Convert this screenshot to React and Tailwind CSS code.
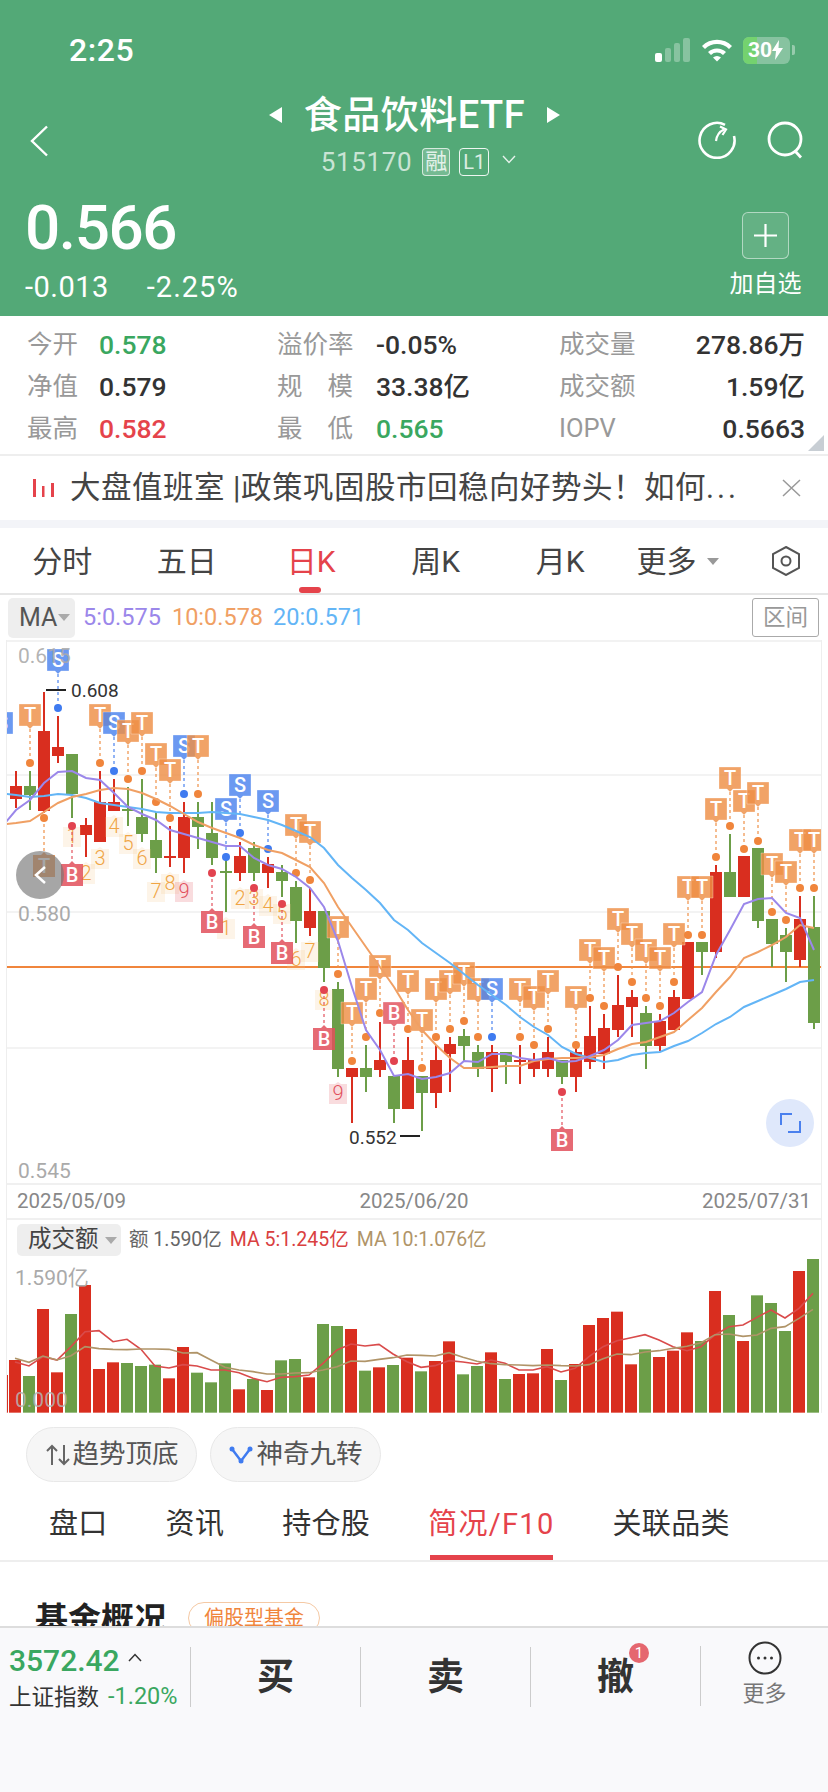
import React from "react";

const RED = "#d92e1f", GREEN = "#6c9e48";
const X = (i) => 16 + 14 * i;

// [color, wickTop, bodyTop, bodyBot, wickBot]
const candles = [
  ["r",771,786,799,808],["g",771,786,795,810],["r",692,731,811,813],["r",716,747,756,763],["g",754,754,794,818],
  ["r",818,825,835,857],["r",771,802,842,842],["r",779,802,811,811],["g",787,809,811,826],["g",779,817,834,842],
  ["g",812,840,858,873],["r",826,856,858,867],["r",802,817,858,873],["g",802,817,827,849],["g",802,833,858,865],
  ["g",860,871,873,912],["r",842,856,873,881],["g",842,848,873,881],["r",857,864,873,888],["g",865,872,881,897],
  ["g",881,887,921,943],["r",888,911,928,936],["g",911,911,968,982],["g",982,989,1069,1077],["r",1068,1068,1077,1123],
  ["g",1045,1068,1077,1092],["r",1022,1060,1070,1077],["g",1076,1076,1109,1123],["r",1037,1060,1109,1109],["g",1076,1076,1093,1131],
  ["r",1045,1060,1093,1108],["r",1037,1044,1054,1092],["g",1029,1036,1046,1062],["g",1045,1052,1069,1077],["r",1045,1052,1069,1092],
  ["g",1052,1052,1062,1084],["r",1045,1060,1062,1084],["r",1053,1060,1069,1077],["r",1037,1052,1069,1077],["g",1060,1060,1077,1084],
  ["r",1045,1052,1077,1092],["r",1006,1036,1062,1069],["r",1014,1028,1054,1069],["r",975,1005,1030,1037],["r",990,997,1007,1037],
  ["g",1006,1013,1046,1069],["r",1014,1021,1046,1051],["r",990,997,1030,1030],["r",942,942,999,999],["g",942,942,952,975],
  ["r",865,872,952,958],["g",834,872,897,897],["r",856,856,897,897],["g",848,848,921,928],["g",919,919,944,967],
  ["g",928,935,952,982],["r",896,919,960,967],["g",896,927,1023,1029],
];

const ma5 = [810,800,783,772,771,778,780,793,807,814,820,830,834,838,842,846,846,858,865,869,877,888,907,941,987,1030,1050,1076,1074,1079,1077,1073,1061,1062,1054,1054,1058,1060,1058,1062,1061,1056,1050,1040,1025,1023,1021,1013,1002,992,955,930,904,899,898,913,918,950];
const ma10 = [823,821,812,803,797,794,790,788,789,793,799,806,814,822,828,833,838,845,850,853,860,867,883,907,927,947,967,987,1010,1030,1045,1058,1068,1068,1067,1066,1066,1061,1059,1058,1058,1057,1055,1049,1044,1042,1037,1032,1020,1008,992,977,958,952,945,937,925,928];
const ma20 = [795,797,796,794,795,798,803,805,807,809,812,813,813,813,812,813,814,817,820,825,831,837,848,865,878,890,903,920,930,943,953,963,974,985,995,1005,1017,1027,1035,1047,1054,1058,1062,1060,1055,1053,1052,1046,1041,1033,1024,1017,1007,1001,995,989,982,980];

// [letter, i, tagTop, dotY]
const upTags = [
  ["S",-1,712,771],["T",1,704,763],["S",3,649,708],["T",6,704,763],["S",7,712,771],["T",8,720,779],["T",9,712,771],
  ["T",10,743,802],["T",11,759,818],["S",12,735,794],["T",13,735,794],["S",15,798,857],["S",16,774,833],["S",18,790,849],
  ["T",20,814,873],["T",21,821,880],["T",23,916,974],["T",24,1002,1061],["T",25,978,1037],["T",26,955,1013],["B",27,1002,1061],
  ["T",28,970,1029],["T",29,1009,1068],["T",30,978,1037],["T",31,970,1029],["T",32,962,1021],["T",33,978,1037],["S",34,978,1037],
  ["T",36,978,1037],["T",37,986,1045],["T",38,970,1029],["T",40,986,1045],["T",41,939,998],["T",42,947,1006],["T",43,908,967],
  ["T",44,923,982],["T",45,939,998],["T",46,947,1006],["T",47,923,982],["T",48,876,935],["T",49,876,935],["T",50,798,857],
  ["T",51,767,826],["T",52,790,849],["T",53,782,841],["T",54,853,912],["T",55,861,920],["T",56,829,888],["T",57,829,888],
];
// [letter, i, tagTop, dotY]
const downTags = [["T",2,855,818],["B",4,864,826],["B",14,911,873],["B",17,926,888],["B",19,942,904],["B",22,1028,990],["B",39,1129,1092]];
// [digit, i, top]
const nums = [
  ["1",4,825],["2",5,862],["3",6,847],["4",7,815],["5",8,832],["6",9,847],["7",10,880],["8",11,872],["9",12,880],
  ["1",15,917],["2",16,887],["3",17,887],["4",18,894],["5",19,902],["6",20,948],["7",21,940],["8",22,988],["9",23,1082],
];

const volTop = [480,528,327,517,342,255,507,487,489,498,494,535,441,518,547,490,568,537,570,481,477,532,372,378,387,512,502,495,473,514,483,424,523,498,457,537,522,520,447,540,492,375,354,335,493,448,471,452,397,423,273,345,423,286,309,393,213,177];
const volKinds = "rgrrgrrrgggrrgggrgrggrggrgrgrgrrggrgrrrgrrrrrgrrrgrgrgggrg";
const volMa5 = [486,498,470,480,440,395,392,425,418,448,498,504,494,498,510,510,518,535,545,532,530,525,490,450,432,438,433,462,485,502,497,482,486,492,480,490,510,510,500,516,505,470,440,422,413,404,420,440,452,440,405,380,375,352,330,354,325,280];
const volMa10 = [475,487,468,480,467,440,446,448,449,447,447,448,459,458,480,502,510,515,522,522,519,518,510,500,483,484,478,473,465,466,468,458,472,484,491,494,495,497,495,497,498,494,476,462,464,456,452,445,439,428,404,402,409,405,385,380,355,328];

const tagColor = { T: "#ee8f46", S: "#4a82ee", B: "#e2505c" };
const dotColor = { T: "#f0853c", S: "#3f7bf0", B: "#e2434f" };

function UpTag({ l, x, top, dot }) {
  const c = tagColor[l];
  return (
    <g>
      <line x1={x} x2={x} y1={top + 25} y2={dot} stroke={c} strokeOpacity="0.6" strokeWidth="2" strokeDasharray="3 3" />
      <circle cx={x} cy={dot} r="4" fill={dotColor[l]} />
      <path d={`M${x - 11} ${top}h22v22h-8l-3 3-3-3h-8z`} fill={c} fillOpacity="0.82" stroke="#fff" strokeOpacity="0.5" strokeWidth="0.6" />
      <text x={x} y={top + 18} textAnchor="middle" fontSize="20" fontWeight="500" fill="#fff">{l}</text>
    </g>
  );
}

function DownTag({ l, x, top, dot }) {
  const c = tagColor[l];
  return (
    <g>
      <line x1={x} x2={x} y1={dot} y2={top - 3} stroke={c} strokeOpacity="0.6" strokeWidth="2" strokeDasharray="3 3" />
      <circle cx={x} cy={dot} r="4" fill={dotColor[l]} />
      <path d={`M${x - 11} ${top}h8l3-3 3 3h8v22h-22z`} fill={c} fillOpacity="0.85" />
      <text x={x} y={top + 18} textAnchor="middle" fontSize="20" fontWeight="500" fill="#fff">{l}</text>
    </g>
  );
}

function NumTag({ n, x, top }) {
  const pink = n === "9";
  return (
    <g>
      <path d={`M${x - 9} ${top + 2}h6l3-2 3 2h6v20h-18z`} fill={pink ? "#e2505c" : "#f5c98a"} fillOpacity="0.2" />
      <text x={x} y={top + 18} textAnchor="middle" fontSize="20" fontWeight="300" fill={pink ? "#e2505c" : "#f0a545"}>{n}</text>
    </g>
  );
}

const poly = (arr, first) =>
  (first ? `6,${first} ` : "") + arr.map((y, i) => `${X(i)},${y}`).join(" ");

function MainChart() {
  return (
    <svg viewBox="0 640 814 543" className="block w-[814px] h-[543px]">
      <rect x="0" y="640" width="814" height="2" fill="#f2f2f2" />
      {[775, 912, 1048].map((y) => (
        <rect key={y} x="0" y={y - 1} width="814" height="2" fill="#f3f3f3" />
      ))}
      <g transform="translate(-7 0)">
        <rect x="6" y="966" width="816" height="2" fill="#f0853c" />
        {candles.map(([k, wt, bt, bb, wb], i) => {
          const c = k === "r" ? RED : GREEN;
          return (
            <g key={i}>
              <rect x={X(i) - 1} y={wt} width="2" height={wb - wt} fill={c} />
              <rect x={X(i) - 6} y={bt} width="12" height={Math.max(bb - bt, 2)} fill={c} />
            </g>
          );
        })}
        {nums.map(([n, i, top], k) => <NumTag key={k} n={n} x={X(i)} top={top} />)}
        {upTags.map(([l, i, top, dot], k) => <UpTag key={k} l={l} x={X(i)} top={top} dot={dot} />)}
        {downTags.map(([l, i, top, dot], k) => <DownTag key={k} l={l} x={X(i)} top={top} dot={dot} />)}
        <polyline points={poly(ma20, 794)} fill="none" stroke="#63b5f6" strokeWidth="2" />
        <polyline points={poly(ma10, 824)} fill="none" stroke="#f0a064" strokeWidth="2" />
        <polyline points={poly(ma5, 822)} fill="none" stroke="#9b87ea" strokeWidth="2" />
        <rect x="46" y="689" width="20" height="2" fill="#222" />
        <text x="71" y="697" fontSize="19" fill="#333">0.608</text>
        <rect x="400" y="1135" width="20" height="2" fill="#222" />
        <text x="349" y="1144" fontSize="19" fill="#333">0.552</text>
        <text x="18" y="663" fontSize="21" fill="#aaa" fillOpacity="0.9">0.615</text>
        <text x="18" y="921" fontSize="21" fill="#aaa">0.580</text>
        <text x="18" y="1178" fontSize="21" fill="#aaa">0.545</text>
      </g>
    </svg>
  );
}

function VolumeChart() {
  const zy = (z) => 1200 + z / 3;
  return (
    <svg viewBox="7 1260 814 153" className="block w-[814px] h-[153px] overflow-visible">
      <rect x="7" y={zy(525)} width="1" height={(638 - 525) / 3} fill={RED} />
      {volTop.map((z, i) => {
        const x = 9 + 14 * i;
        const c = volKinds[i] === "r" ? RED : GREEN;
        return <rect key={i} x={x} y={zy(z)} width="12" height={(638 - z) / 3} fill={c} />;
      })}
      <polyline points={volMa5.map((z, i) => `${15 + 14 * i},${zy(z)}`).join(" ")} fill="none" stroke="#d94b4b" strokeWidth="1.6" />
      <polyline points={volMa10.map((z, i) => `${15 + 14 * i},${zy(z)}`).join(" ")} fill="none" stroke="#b09468" strokeWidth="1.6" />
      <text x="15" y="1285" fontSize="21" fill="#aaa">1.590亿</text>
      <text x="15" y="1407" fontSize="21" fill="#b5b5b5" fillOpacity="0.85">0.000</text>
    </svg>
  );
}

function Caret({ className }) {
  return <span className={`inline-block w-0 h-0 border-x-[6px] border-x-transparent border-t-[7px] ${className}`} />;
}

function StatusBar() {
  return (
    <div className="flex items-center justify-between h-[96px] pt-[4px] pl-[69px] pr-[33px]">
      <span className="text-[32px] font-medium leading-none tracking-[0.6px] text-white">2:25</span>
      <div className="flex items-center">
        <svg width="36" height="24" viewBox="0 0 36 24">
          <rect x="0" y="15" width="7" height="9" rx="2" fill="#fff" />
          <rect x="10" y="10" width="6" height="14" rx="2" fill="#fff" fillOpacity="0.3" />
          <rect x="19" y="5" width="6" height="19" rx="2" fill="#fff" fillOpacity="0.3" />
          <rect x="28" y="0" width="7" height="24" rx="2" fill="#fff" fillOpacity="0.3" />
        </svg>
        <svg width="32" height="24" viewBox="0 0 32 24" className="ml-[10px]">
          <path d="M1 8a21 21 0 0 1 30 0l-3 3a17 17 0 0 0-24 0z" fill="#fff" />
          <path d="M7 14a13 13 0 0 1 18 0l-3 3a8.5 8.5 0 0 0-12 0z" fill="#fff" />
          <path d="M12 19.5a6 6 0 0 1 8 0l-4 4z" fill="#fff" />
        </svg>
        <div className="relative ml-[10px] w-[47px] h-[27px] rounded-[6px] bg-white/30 overflow-hidden flex items-center pl-[5px]">
          <div className="absolute left-0 top-0 bottom-0 w-[14px] bg-[#74d26f]" />
          <span className="relative text-[21px] font-bold leading-none text-white">30</span>
          <svg width="11" height="20" viewBox="0 0 11 20" className="relative">
            <path d="M7 0 0 11h4l-1 9 8-12H6.500z" fill="#fff" />
          </svg>
        </div>
        <div className="ml-[2px] w-[3px] h-[10px] rounded-r-[2px] bg-white/40" />
      </div>
    </div>
  );
}

function Nav() {
  return (
    <div className="grid grid-cols-[1fr_auto_1fr] items-center h-[80px] pl-[30px] pr-[23px]">
      <svg width="19" height="32" viewBox="0 0 19 32" className="mt-[10px]">
        <path d="M17 1.500 2 16l15 14.500" fill="none" stroke="#fff" strokeWidth="2.400" />
      </svg>
      <div className="flex flex-col items-center">
        <div className="flex items-center h-[38px] pr-[6px]">
          <span className="w-0 h-0 border-y-[8px] border-y-transparent border-r-[13px] border-r-white" />
          <span className="mx-[22px] text-[38px] leading-none font-medium tracking-[0.5px] text-white">食品饮料ETF</span>
          <span className="w-0 h-0 border-y-[8px] border-y-transparent border-l-[13px] border-l-white" />
        </div>
        <div className="flex items-center h-[28px] mt-[14px] ml-[2px]">
          <span className="text-[26px] leading-none tracking-[0.6px] text-white/70">515170</span>
          <span className="ml-[10px] w-[28px] h-[28px] flex items-center justify-center rounded-[4px] border border-white/70 bg-white/20 text-[22px] leading-none text-white/80">融</span>
          <span className="ml-[9px] w-[30px] h-[28px] flex items-center justify-center rounded-[4px] border border-white/90 text-[20px] leading-none text-white/80">L1</span>
          <svg width="14" height="9" viewBox="0 0 14 9" className="ml-[13px] -mt-[6px]">
            <path d="M1 1l6 6.500L13 1" fill="none" stroke="#fff" strokeOpacity="0.85" strokeWidth="1.400" />
          </svg>
        </div>
      </div>
      <div className="flex items-center justify-end gap-[31px] mt-[8px]">
        <svg width="38" height="38" viewBox="0 0 38 38" fill="none" stroke="#fff" strokeWidth="2.600">
          <path d="M27 3.800A17.500 17.500 0 1 0 36 15" />
          <path d="M18 20c.500-4 2.500-9 8-11.500" strokeWidth="2.200" />
          <path d="M22 5.500l6 3-3.500 5.500" strokeWidth="2.200" />
        </svg>
        <svg width="38" height="38" viewBox="0 0 38 38" fill="none" stroke="#fff" strokeWidth="2.800">
          <circle cx="18" cy="18" r="16" />
          <path d="M28 30l6 6.500" />
        </svg>
      </div>
    </div>
  );
}

function Quote() {
  return (
    <div className="flex justify-between pl-[25px] pr-[27px]">
      <div className="flex flex-col">
        <div className="mt-[22px] h-[60px] text-[62px] leading-[60px] font-medium tracking-[-1.400px] text-white">0.566</div>
        <div className="mt-[12px] flex items-center h-[34px] text-[29px] leading-none text-white">
          <span className="tracking-[0.5px]">-0.013</span>
          <span className="ml-[38px] tracking-[1px]">-2.25%</span>
        </div>
      </div>
      <div className="flex flex-col items-center w-[71px]">
        <div className="mt-[36px] w-[47px] h-[47px] rounded-[6px] border border-white/50 bg-white/10 flex items-center justify-center">
          <svg width="25" height="25" viewBox="0 0 25 25">
            <path d="M12.500 1v23M1 12.500h23" stroke="#fff" strokeWidth="2.200" />
          </svg>
        </div>
        <span className="mt-[13px] text-[24px] leading-none whitespace-nowrap text-white">加自选</span>
      </div>
    </div>
  );
}

function Stat({ label, value, vc = "text-[#333]", lw, spread, end }) {
  return (
    <div className={`flex items-center h-[42px] ${end ? "justify-between" : ""}`}>
      <span className={`${lw} text-[25.500px] leading-none text-[#999] ${spread ? "flex justify-between pr-[23px]" : ""}`}>
        {spread ? (<><span>{label[0]}</span><span>{label[1]}</span></>) : label}
      </span>
      <span className={`text-[26.500px] leading-none font-medium ${vc}`}>{value}</span>
    </div>
  );
}

function Stats() {
  const G = "text-[#3aa760]", R = "text-[#e5434b]";
  return (
    <div className="relative h-[140px] pt-[8px] pl-[27px] pr-[23px] border-b-2 border-[#eeeeee] grid grid-cols-[250px_282px_1fr]">
      <div>
        <Stat label="今开" value="0.578" vc={G} lw="w-[72px]" />
        <Stat label="净值" value="0.579" lw="w-[72px]" />
        <Stat label="最高" value="0.582" vc={R} lw="w-[72px]" />
      </div>
      <div>
        <Stat label="溢价率" value="-0.05%" lw="w-[99px]" />
        <Stat label="规模" spread value="33.38亿" lw="w-[99px]" />
        <Stat label="最低" spread value="0.565" vc={G} lw="w-[99px]" />
      </div>
      <div>
        <Stat end label="成交量" value="278.86万" />
        <Stat end label="成交额" value="1.59亿" />
        <Stat end label="IOPV" value="0.5663" />
      </div>
      <span className="absolute right-[4px] bottom-[3px] w-0 h-0 border-l-[16px] border-l-transparent border-b-[16px] border-b-[#c8ced4]" />
    </div>
  );
}

function Banner() {
  return (
    <div className="flex items-center h-[64px] pl-[33px] pr-[27px]">
      <svg width="22" height="18" viewBox="0 0 22 18" className="shrink-0">
        <rect x="0" y="0" width="3" height="18" fill="#e5434b" />
        <rect x="9" y="7" width="2.500" height="11" fill="#e5434b" />
        <rect x="18" y="4" width="3" height="14" fill="#e5434b" />
      </svg>
      <span className="ml-[15px] w-[668px] text-[30.500px] leading-none tracking-[0.5px] text-[#444] whitespace-nowrap">
        大盘值班室 |政策巩固股市回稳向好势头！如何<span className="tracking-[3px]">...</span>
      </span>
      <svg width="19" height="18" viewBox="0 0 19 18" className="ml-auto">
        <path d="M1 1l17 16M18 1 1 17" stroke="#999" strokeWidth="1.500" />
      </svg>
    </div>
  );
}

function PeriodTabs() {
  const items = ["分时", "五日", "日K", "周K", "月K"];
  return (
    <div className="grid grid-cols-[repeat(5,124.500px)_110px_1fr] h-[67px] border-b-2 border-[#e6e6e6]">
      {items.map((t) => (
        <div key={t} className="relative flex items-center justify-center pt-[2px]">
          <span className={`text-[30px] leading-none ${t === "日K" ? "text-[#e5434b]" : "text-[#444]"}`}>{t}</span>
          {t === "日K" && <span className="absolute bottom-0 left-[50px] w-[22px] h-[6px] rounded-[3px] bg-[#e5434b]" />}
        </div>
      ))}
      <div className="flex items-center justify-center pt-[2px]">
        <span className="text-[30px] leading-none text-[#444]">更多</span>
        <Caret className="ml-[10px] border-t-[#999]" />
      </div>
      <div className="flex items-center pl-[39px]">
        <svg width="28" height="30" viewBox="0 0 28 30" fill="none" stroke="#555" strokeWidth="2">
          <path d="M14 1 27 8v14l-13 7-13-7V8z" />
          <circle cx="14" cy="15" r="4.500" />
        </svg>
      </div>
    </div>
  );
}

function MaRow() {
  return (
    <div className="flex items-center h-[45px] pl-[8px] pr-[9px]">
      <div className="flex items-center w-[67px] h-[40px] rounded-[5px] bg-[#eeeeee] pl-[11px]">
        <span className="text-[25px] leading-none text-[#555]">MA</span>
        <Caret className="ml-[1px] border-x-[5px] border-t-[6px] border-t-[#aaa]" />
      </div>
      <span className="ml-[8px] text-[23.500px] leading-none text-[#9b87ea]">5:0.575</span>
      <span className="ml-[11px] text-[23.500px] leading-none text-[#f0a064]">10:0.578</span>
      <span className="ml-[10px] text-[23.500px] leading-none text-[#63b5f6]">20:0.571</span>
      <span className="ml-auto w-[67px] h-[39px] flex items-center justify-center rounded-[3px] border border-[#aaaaaa] text-[22.500px] leading-none text-[#999]">区间</span>
    </div>
  );
}

function Charts() {
  return (
    <div className="relative ml-[6px] w-[816px] border-x border-[#eeeeee]">
      <MainChart />
      <div className="flex items-center justify-between h-[37px] pl-[10px] pr-[10px] border-y-2 border-[#f0f0f0] text-[20.500px] leading-none text-[#888]">
        <span>2025/05/09</span>
        <span>2025/06/20</span>
        <span>2025/07/31</span>
      </div>
      <div className="flex items-center h-[40px] pl-[10px]">
        <div className="flex items-center w-[104px] h-[32px] rounded-[5px] bg-[#eeeeee] pl-[11px]">
          <span className="text-[23.500px] leading-none text-[#444]">成交额</span>
          <Caret className="ml-[6px] border-x-[5px] border-t-[5px] border-t-[#aaa]" />
        </div>
        <span className="ml-[8px] text-[19.500px] leading-none text-[#666]">额 1.590亿</span>
        <span className="ml-[8px] text-[19.500px] leading-none text-[#d94040]">MA 5:1.245亿</span>
        <span className="ml-[8px] text-[19.500px] leading-none text-[#b09468]">MA 10:1.076亿</span>
      </div>
      <VolumeChart />
      <div className="absolute left-[9px] top-[211px] w-[48px] h-[48px] rounded-full bg-[#777]/65 flex items-center justify-center">
        <svg width="14" height="20" viewBox="0 0 14 20"><path d="M12 2 3 10l9 8" fill="none" stroke="#fff" strokeWidth="2.500" /></svg>
      </div>
      <div className="absolute left-[759px] top-[459px] w-[48px] h-[48px] rounded-full bg-[#dfe8fb] flex items-center justify-center">
        <svg width="22" height="22" viewBox="0 0 22 22" fill="none" stroke="#4a80ee" strokeWidth="2">
          <path d="M13 2H2v11" />
          <path d="M21 9v11H9" />
        </svg>
      </div>
    </div>
  );
}

function Pills() {
  const pill = "flex items-center justify-center w-[171px] h-[55px] rounded-full border border-[#e8e8e8] bg-[#f6f6f6] text-[26.500px] leading-none text-[#555]";
  return (
    <div className="flex gap-[13px] pl-[26px] mt-[14px]">
      <div className={pill}>
        <svg width="26" height="22" viewBox="0 0 26 22" className="mr-[2px]" fill="none" stroke="#666" strokeWidth="2">
          <path d="M7 21V3M2 7l5-5 5 5" />
          <path d="M19 1v18M14 15l5 5 5-5" />
        </svg>
        趋势顶底
      </div>
      <div className={pill}>
        <svg width="24" height="18" viewBox="0 0 24 18" className="mr-[4px]" fill="none" stroke="#3f7bf0" strokeWidth="2.500">
          <path d="M3 3l9 12 9-12" />
          <circle cx="3" cy="3" r="2.500" fill="#3f7bf0" stroke="none" />
          <circle cx="21" cy="3" r="2.500" fill="#3f7bf0" stroke="none" />
          <circle cx="12" cy="15" r="2.500" fill="#3f7bf0" stroke="none" />
        </svg>
        神奇九转
      </div>
    </div>
  );
}

function DetailTabs() {
  const items = ["盘口", "资讯", "持仓股", "简况/F10", "关联品类"];
  return (
    <div className="flex gap-[58px] h-[80px] pl-[49px] border-b-2 border-[#eeeeee]">
      {items.map((t) => (
        <div key={t} className="relative flex items-center pt-[6px]">
          <span className={`text-[29px] leading-none whitespace-nowrap ${t.startsWith("简") ? "text-[#e5434b] tracking-[1.300px]" : "text-[#333] tracking-[0.3px]"}`}>{t}</span>
          {t.startsWith("简") && <span className="absolute bottom-0 left-[2px] right-[2px] h-[5px] bg-[#e5434b]" />}
        </div>
      ))}
    </div>
  );
}

function BottomBar() {
  const Cell = ({ children }) => (
    <div className="relative flex items-center justify-center w-[170px] border-l border-[#cccccc] h-[60px]">{children}</div>
  );
  return (
    <div className="flex items-start h-[166px] pt-[19px] border-t-2 border-[#dddddd] bg-[#f9f9fb]">
      <div className="w-[190px] pl-[9px] -mt-[1px]">
        <div className="flex items-center h-[30px]">
          <span className="text-[30px] leading-none font-medium text-[#3aa760]">3572.42</span>
          <svg width="14" height="9" viewBox="0 0 14 9" className="ml-[8px] -mt-[8px]">
            <path d="M1 8l6-6.500L13 8" fill="none" stroke="#333" strokeWidth="1.500" />
          </svg>
        </div>
        <div className="flex items-center mt-[9px] h-[24px]">
          <span className="text-[22.500px] leading-none text-[#333]">上证指数</span>
          <span className="ml-[9px] text-[23.500px] leading-none text-[#3aa760]">-1.20%</span>
        </div>
      </div>
      <Cell><span className="text-[37px] leading-none font-bold text-[#333]">买</span></Cell>
      <Cell><span className="text-[37px] leading-none font-bold text-[#333]">卖</span></Cell>
      <Cell>
        <span className="text-[37px] leading-none font-bold text-[#333]">撤</span>
        <span className="absolute left-[98px] top-[-4px] w-[20px] h-[20px] rounded-full bg-[#e5676f] flex items-center justify-center text-[15px] leading-none text-white">1</span>
      </Cell>
      <div className="flex flex-col items-center justify-start w-[128px] h-[60px] border-l border-[#cccccc] -mt-[1px]">
        <svg width="34" height="34" viewBox="0 0 34 34" className="-mt-[5px]" fill="none">
          <circle cx="17" cy="17" r="15.500" stroke="#333" strokeWidth="2" />
          <circle cx="10.500" cy="17" r="1.500" fill="#333" />
          <circle cx="17" cy="17" r="1.500" fill="#333" />
          <circle cx="23.500" cy="17" r="1.500" fill="#333" />
        </svg>
        <span className="mt-[8px] text-[22px] leading-none text-[#777]">更多</span>
      </div>
    </div>
  );
}

export default function App() {
  return (
    <div className="flex flex-col w-[828px] h-[1792px] overflow-hidden bg-white font-['Roboto','Noto_Sans_CJK_SC',sans-serif]">
      <div className="h-[316px] shrink-0 bg-[#53a977]">
        <StatusBar />
        <Nav />
        <Quote />
      </div>
      <Stats />
      <Banner />
      <div className="h-[8px] bg-[#f3f4f8]" />
      <PeriodTabs />
      <MaRow />
      <Charts />
      <Pills />
      <DetailTabs />
      <div className="flex-1 min-h-0 overflow-hidden">
        <div className="flex items-center pl-[35px] pt-[41px]">
          <span className="text-[33px] leading-none font-bold text-[#222]">基金概况</span>
          <span className="ml-[21px] -mt-[4px] h-[32px] px-[15px] flex items-center rounded-[16px] border border-[#f5c9a4] text-[20px] leading-none text-[#f0853c]">偏股型基金</span>
        </div>
      </div>
      <BottomBar />
    </div>
  );
}
